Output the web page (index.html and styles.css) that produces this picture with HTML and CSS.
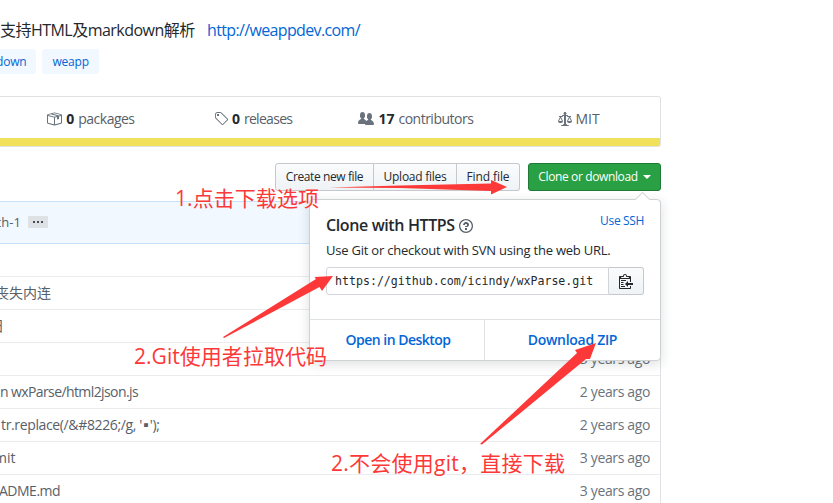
FILE: index.html
```html
<!DOCTYPE html>
<html lang="zh">
<head>
<meta charset="utf-8">
<title>wxParse</title>
<link rel="stylesheet" href="styles.css">
</head>
<body>
<main class="repo">
  <p class="about"><span class="desc">支持HTML及markdown解析</span><a class="site">http://weappdev.com/</a></p>
  <div class="topics"><a class="topic topic-cut">down</a><a class="topic">weapp</a></div>

  <section class="summary">
    <ul class="stats">
      <li><svg width="16" height="16" viewBox="0 0 16 16"><path fill-rule="evenodd" d="M1 4.27v7.47c0 .45.3.84.75.97l6.5 1.73c.16.05.34.05.5 0l6.5-1.73c.45-.13.75-.52.75-.97V4.27c0-.45-.3-.84-.75-.97l-6.5-1.74a1.4 1.4 0 0 0-.5 0L1.75 3.3c-.45.13-.75.52-.75.97zm7 9.09l-6-1.59V5l6 1.61v6.75zM2 4l2.5-.67L11 5.06l-2.5.67L2 4zm13 7.77l-6 1.59V6.61l2-.55V8.5l2-.53V5.53L15 5v6.77zm-2-7.24L6.5 2.8l2-.53L15 4l-2 .53z"/></svg><b>0</b><span class="packages">packages</span></li>
      <li><svg width="14" height="16" viewBox="0 0 14 16"><path fill-rule="evenodd" d="M7.73 1.73C7.26 1.26 6.62 1 5.96 1H3.5C2.13 1 1 2.13 1 3.5v2.47c0 .66.27 1.3.73 1.77l6.06 6.06c.39.39 1.02.39 1.41 0l4.59-4.59a.996.996 0 0 0 0-1.41L7.73 1.73zM2.38 7.09c-.31-.3-.47-.7-.47-1.13V3.5c0-.88.72-1.59 1.59-1.59h2.47c.42 0 .83.16 1.13.47l6.14 6.13-4.73 4.73-6.13-6.15zM3.01 3h2v2H3V3h.01z"/></svg><b>0</b><span class="releases">releases</span></li>
      <li><svg width="16" height="16" viewBox="0 0 16 16"><path fill-rule="evenodd" d="M16 12.999c0 .439-.45 1-1 1H7.995c-.539 0-.994-.447-.995-.999H1c-.54 0-1-.561-1-1 0-2.634 3-4 3-4s.229-.409 0-1c-.841-.621-1.058-.59-1-3 .058-2.419 1.367-3 2.5-3s2.442.58 2.5 3c.058 2.41-.159 2.379-1 3-.229.59 0 1 0 1s1.549.711 2.42 2.088C9.196 9.369 10 8.999 10 8.999s.229-.409 0-1c-.841-.62-1.058-.59-1-3 .058-2.419 1.367-3 2.5-3s2.437.581 2.495 3c.059 2.41-.158 2.38-1 3-.229.59 0 1 0 1s3.005 1.366 3.005 4z"/></svg><b>17</b><span class="contributors">contributors</span></li>
      <li><svg width="14" height="16" viewBox="0 0 14 16"><path fill-rule="evenodd" d="M7 4c-.83 0-1.5-.67-1.5-1.5S6.17 1 7 1s1.5.67 1.5 1.5S7.83 4 7 4zm7 6c0 1.11-.89 2-2 2h-1c-1.11 0-2-.89-2-2l2-4h-1c-.55 0-1-.45-1-1H8v8c.42 0 1 .45 1 1h1c.42 0 1 .45 1 1H3c0-.55.58-1 1-1h1c0-.55.58-1 1-1h.03L6 5H5c0 .55-.45 1-1 1H3l2 4c0 1.11-.89 2-2 2H2c-1.11 0-2-.89-2-2l2-4H1V5h3c0-.55.45-1 1-1h4c.55 0 1 .45 1 1h3v1h-1l2 4zM2.5 7L1 10h3L2.5 7zM13 10l-1.5-3-1.5 3h3z"/></svg><span class="license">MIT</span></li>
    </ul>
    <div class="language"></div>
  </section>

  <nav class="actions">
    <div class="group"><button class="btn create">Create new file</button><button class="btn upload">Upload files</button><button class="btn find">Find file</button></div>
    <div class="clone">
      <button class="btn primary"><span>Clone or download</span><i class="caret"></i></button>
      <div class="popup">
        <div class="popup-body">
          <div class="popup-head"><h4>Clone with HTTPS</h4><svg width="14" height="16" viewBox="0 0 14 16"><path fill-rule="evenodd" d="M6 10h2v2H6v-2zm4-3.5C10 8.64 8 9 8 9H6c0-.55.45-1 1-1h.5c.28 0 .5-.22.5-.5v-1c0-.28-.22-.5-.5-.5h-1c-.28 0-.5.22-.5.5V7H4c0-1.5 1.5-3 3-3s3 1 3 2.5zM7 2.3c3.14 0 5.7 2.56 5.7 5.7s-2.56 5.7-5.7 5.7A5.71 5.71 0 0 1 1.3 8c0-3.14 2.56-5.7 5.7-5.7zM7 1C3.14 1 0 4.14 0 8s3.14 7 7 7 7-3.14 7-7-3.14-7-7-7z"/></svg><a class="ssh">Use SSH</a></div>
          <p class="hint">Use Git or checkout with SVN using the web URL.</p>
          <div class="field"><span class="url">https://github.com/icindy/wxParse.git</span><button class="copy"><svg width="14" height="16" viewBox="0 0 14 16"><path fill-rule="evenodd" d="M2 13h4v1H2v-1zm5-6H2v1h5V7zm2 3V8l-3 3 3 3v-2h5v-2H9zM4.5 9H2v1h2.5V9zM2 12h2.5v-1H2v1zm9 1h1v2c-.02.28-.11.52-.3.7-.19.18-.42.28-.7.3H1c-.55 0-1-.45-1-1V4c0-.55.45-1 1-1h3c0-1.11.89-2 2-2 1.11 0 2 .89 2 2h3c.55 0 1 .45 1 1v5h-1V6H1v9h10v-2zM2 5h8c0-.55-.45-1-1-1H8c-.55 0-1-.45-1-1s-.45-1-1-1-1 .45-1 1-.45 1-1 1H3c-.55 0-1 .45-1 1z"/></svg></button></div>
        </div>
        <div class="popup-foot"><a class="desktop">Open in Desktop</a><a class="zip">Download ZIP</a></div>
      </div>
    </div>
  </nav>

  <section class="commit"><span class="branch">ch-1</span><span class="more"><i></i><i></i><i></i></span></section>
  <section class="files">
    <div class="row"></div>
    <div class="row"><span class="msg cjk">丧失内连</span></div>
    <div class="row"><span class="msg cut-day">日</span></div>
    <div class="row"><span class="age">3 years ago</span></div>
    <div class="row"><span class="msg json">n wxParse/html2json.js</span><span class="age">2 years ago</span></div>
    <div class="row"><span class="msg replace">tr.replace(/&amp;#8226;/g, '<span class="bullet">▪</span>');</span><span class="age">2 years ago</span></div>
    <div class="row"><span class="msg commit-msg">mit</span><span class="age">3 years ago</span></div>
    <div class="row"><span class="msg readme">ADME.md</span><span class="age">3 years ago</span></div>
  </section>
</main>

<svg class="notes" width="833" height="503" viewBox="0 0 833 503">
  <path d="M329 187.5L400 185.5L491 183.5V180L507 187L491 194.5V191L400 188Z"/>
  <path d="M223 337L316 279L314.5 277L333 276L322 291L319.5 287L224 338Z"/>
  <path d="M480 444L577 353L575 350L596 343L590 359L586 359L482 444.500Z"/>
  <text x="175" y="206" textLength="144">1.点击下载选项</text>
  <text x="134" y="364" textLength="193">2.Git使用者拉取代码</text>
  <text x="331" y="471" textLength="234">2.不会使用git，直接下载</text>
</svg>
</body>
</html>
```
FILE: styles.css
```css
* { box-sizing: border-box; }
body {
  margin: 0;
  width: 833px;
  height: 503px;
  overflow: hidden;
  position: relative;
  background: #fff;
  color: #24292e;
  font: 14px/20px "Open Sans", "Noto Sans CJK SC", sans-serif;
}
p, ul, h4 { margin: 0; padding: 0; }
svg { fill: currentColor; flex: none; }
button { font: inherit; color: inherit; margin: 0; }
span, a, b { white-space: nowrap; }

.repo { width: 661px; }
.about { display: flex; height: 48px; padding-top: 18px; font-size: 16px; line-height: 24px; }
.desc { width: 207px; letter-spacing: -.53px; }
.site { color: #0366d6; letter-spacing: -.64px; }
.topics { display: flex; gap: 6px; height: 48px; padding-top: 1px; }
.topic {
  height: 25px;
  padding: 0 10px;
  border-radius: 3px;
  background: #f1f8ff;
  color: #0366d6;
  font-size: 12px;
  line-height: 25px;
  letter-spacing: -.2px;
}
.topic-cut { margin-left: -14px; }

.summary {
  height: 51px;
  border: 1px solid #dfe2e5;
  border-left: 0;
  border-radius: 0 3px 3px 0;
  overflow: hidden;
}
.stats {
  display: grid;
  grid-template-columns: repeat(4, 1fr);
  height: 41px;
  padding-left: 9px;
  list-style: none;
  color: #586069;
}
.stats li { display: flex; justify-content: center; align-items: center; padding-top: 2px; }
.stats svg { color: #6a737d; }
.stats b { margin: 0 4px; color: #24292e; }
.packages, .contributors { letter-spacing: -.5px; }
.releases { letter-spacing: -.7px; }
.license { margin-left: 4px; }
.language { height: 8px; background: #f1e05a; }

.actions { display: flex; justify-content: flex-end; gap: 8px; height: 54px; padding-top: 16px; }
.group { display: flex; }
.btn {
  height: 28px;
  padding: 0;
  border: 1px solid #c5c9cd;
  background: linear-gradient(#fafbfc, #eff3f6);
  font-size: 12px;
  line-height: 26px;
  white-space: nowrap;
}
.create { width: 99px; border-radius: 3px 0 0 3px; letter-spacing: -.4px; }
.upload { width: 83px; border-left: 0; letter-spacing: -.26px; }
.find { width: 63px; border-left: 0; border-radius: 0 3px 3px 0; letter-spacing: -.1px; }
.clone { position: relative; }
.primary {
  display: flex;
  justify-content: center;
  align-items: center;
  gap: 5px;
  width: 133px;
  border-color: #1f7a35;
  border-radius: 3px;
  background: #28a043;
  color: #fff;
  letter-spacing: -.38px;
}
.caret { border: 4px solid transparent; border-top-color: #fff; border-bottom: 0; }
.popup {
  position: absolute;
  z-index: 2;
  top: 36px;
  right: 0;
  width: 352px;
  height: 162px;
  border: 1px solid #cfd2d5;
  border-radius: 4px;
  background: #fff;
  box-shadow: 0 3px 12px rgba(27, 31, 35, .15);
}
.popup::before {
  content: "";
  position: absolute;
  top: -6px;
  right: 12px;
  width: 10px;
  height: 10px;
  border: 1px solid #d5d8da;
  border-right: 0;
  border-bottom: 0;
  background: #fff;
  transform: rotate(45deg);
}
.popup-body { height: 119px; padding: 13px 16px 0; }
.popup-head { display: flex; align-items: center; height: 24px; }
.popup-head h4 { margin-right: 4px; font-size: 16px; font-weight: 600; letter-spacing: -.38px; white-space: nowrap; }
.popup-head svg { color: #586069; margin-top: 2px; }
.ssh { margin: -8px 0 0 auto; color: #0366d6; font-size: 12px; letter-spacing: -.35px; }
.hint { height: 30px; padding-top: 3px; font-size: 13px; letter-spacing: -.22px; white-space: nowrap; }
.field { display: flex; height: 28px; }
.url {
  width: 283px;
  padding-left: 8px;
  border: 1px solid #d1d5da;
  border-radius: 3px 0 0 3px;
  font: 11.6px/26px "DejaVu Sans Mono", monospace;
}
.copy {
  display: flex;
  justify-content: center;
  align-items: center;
  width: 35px;
  padding: 0;
  border: 1px solid #c5c9cd;
  border-left: 0;
  border-radius: 0 3px 3px 0;
  background: linear-gradient(#fafbfc, #eff3f6);
}
.popup-foot { display: grid; grid-template-columns: 174px 1fr; height: 41px; border-top: 1px solid #dfe2e5; }
.popup-foot a { color: #0366d6; font-weight: 600; line-height: 40px; text-align: center; }
.popup-foot .desktop { padding-left: 2px; letter-spacing: -.52px; }
.popup-foot .zip { border-left: 1px solid #dfe2e5; letter-spacing: -.3px; }

.commit {
  display: flex;
  align-items: center;
  height: 43px;
  border: 1px solid #c8e1f6;
  border-left: 0;
  background: #f1f8ff;
  color: #586069;
  font-size: 13px;
}
.branch { width: 33px; margin: -2px 0 0 -5px; }
.more { display: flex; justify-content: center; align-items: center; gap: 2px; width: 20px; height: 12px; margin-top: -1px; border-radius: 1px; background: #dfe2e5; }
.more i { width: 2px; height: 2px; background: #444d56; }

.files { height: 266px; border-right: 1px solid #dfe2e5; color: #586069; overflow: hidden; }
.row { display: flex; justify-content: space-between; align-items: center; height: 33px; padding-right: 10px; border-bottom: 1px solid #eaecef; }
.age { margin-left: auto; color: #6a737d; letter-spacing: -.36px; }
.cjk { margin-left: -5px; }
.cut-day { margin-left: -10px; }
.json { letter-spacing: -.6px; }
.replace { margin-left: 1px; letter-spacing: -.36px; }
.bullet { margin: 0 -3px; }
.commit-msg { margin-left: -6px; }
.readme { margin-left: -1px; letter-spacing: -.5px; }

.notes { position: absolute; z-index: 3; top: 0; left: 0; fill: #fc3938; }
.notes text { font-size: 21px; }
```
